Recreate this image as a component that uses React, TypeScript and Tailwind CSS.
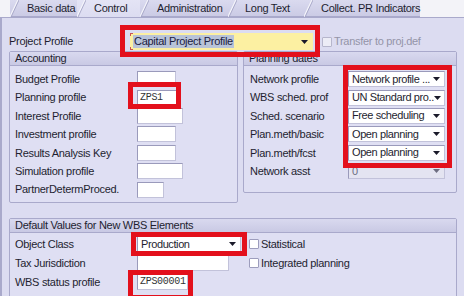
import clsx from "clsx";

type FieldProps = { className?: string; value?: string; mono?: boolean };

function Field({ className, value, mono }: FieldProps) {
  return (
    <div
      className={clsx(
        "h-[16px] bg-white border border-[#c2c2da] border-t-[#9a9abb] border-l-[#9a9abb] pl-[2px] flex items-center leading-none whitespace-nowrap",
        mono && "font-['Liberation_Mono',monospace] text-[10px] tracking-[-0.3px] text-[#333]",
        className
      )}
    >
      {value}
    </div>
  );
}

type SelectProps = { className?: string; value: string; disabled?: boolean };

function Select({ className, value, disabled }: SelectProps) {
  return (
    <div
      className={clsx(
        "h-[16px] flex items-center justify-between pl-[3px] pr-[4px] border border-[#c2c2da] border-t-[#9a9abb] border-l-[#9a9abb] leading-none",
        disabled ? "bg-[#e4e4f1] text-[#6d6d80]" : "bg-white",
        className
      )}
    >
      <span className="whitespace-nowrap tracking-[-0.4px]">{value}</span>
      <svg width="7" height="4" viewBox="0 0 7 4" className="shrink-0">
        <path d="M0 0h7L3.5 4z" fill={disabled ? "#6d6d80" : "#1a1a2a"} />
      </svg>
    </div>
  );
}

function Check({ label }: { label: string }) {
  return (
    <div className="flex items-center gap-[2px]">
      <div className="w-[10px] h-[10px] bg-white border border-[#9d9dbd] rounded-[1px]" />
      <span>{label}</span>
    </div>
  );
}

function Panel({ title, className, children }: { title: string; className?: string; children: React.ReactNode }) {
  return (
    <div className={clsx("border border-[#a9a9cb] rounded-[2px] bg-[#dfdff3]", className)}>
      <div className="h-[14px] bg-gradient-to-b from-[#d9d9ef] to-[#c9c9e4] border-b border-[#a9a9cb] pl-[5px] leading-[13px]">
        {title}
      </div>
      {children}
    </div>
  );
}

const tabs = [
  { label: "Basic data", w: "w-[67px]", active: false },
  { label: "Control", w: "w-[63px]", active: true },
  { label: "Administration", w: "w-[88px]", active: false },
  { label: "Long Text", w: "w-[76px]", active: false },
  { label: "Collect. PR Indicators", w: "w-[116px]", active: false },
];

const accounting: { label: string; w: string; value?: string }[] = [
  { label: "Budget Profile", w: "w-[39px]" },
  { label: "Planning profile", w: "w-[41px]", value: "ZPS1" },
  { label: "Interest Profile", w: "w-[46px]" },
  { label: "Investment profile", w: "w-[39px]" },
  { label: "Results Analysis Key", w: "w-[39px]" },
  { label: "Simulation profile", w: "w-[46px]" },
  { label: "PartnerDetermProced.", w: "w-[27px]" },
];

const planning = [
  { label: "Network profile", value: "Network profile ..." },
  { label: "WBS sched. prof", value: "UN Standard pro.." },
  { label: "Sched. scenario", value: "Free scheduling" },
  { label: "Plan.meth/basic", value: "Open planning" },
  { label: "Plan.meth/fcst", value: "Open planning" },
];

export default function App() {
  return (
    <div className="relative w-[464px] h-[296px] overflow-hidden bg-[#f3f3f8] font-['Liberation_Sans',Arial,sans-serif] text-[11px] tracking-[-0.3px] text-[#1e1e30]">
      {/* tab strip */}
      <div className="h-[17px] flex items-end pl-[10px]">
        {tabs.map((t) => (
          <div
            key={t.label}
            className={clsx(
              "relative h-[17px] pl-[17px] leading-[16px] whitespace-nowrap",
              t.w,
              t.active
                ? "bg-gradient-to-b from-[#e4e4f5] to-[#dcdcf1] z-10"
                : "bg-gradient-to-b from-[#dadaef] to-[#cbcbe5] border-b border-[#a9a9cb]"
            )}
          >
            <svg className="absolute left-0 top-0" width="9" height="17" viewBox="0 0 9 17">
              <path d="M0 17L8 0" stroke="#f5f5fb" strokeWidth="1.4" />
              <path d="M1 17L9 0" stroke="#9d9dc0" strokeWidth="0.8" />
            </svg>
            {t.label}
          </div>
        ))}
      </div>

      {/* content */}
      <div className="h-[279px] bg-[#dcdcf1] border-l-2 border-t border-[#a9a9cb] pl-[7px]">
        <div className="mt-[15px] h-[17px] flex items-center">
          <div className="w-[121px]">Project Profile</div>
          <div className="relative w-[183px] h-[17px] bg-[#fcf0a2] flex items-center justify-between pl-[3px] pr-[5px]">
            <div className="absolute left-0 top-0 w-[3px] h-[3px] border-l border-t border-[#c55]" />
            <div className="absolute left-0 bottom-0 w-[3px] h-[3px] border-l border-b border-[#c55]" />
            <span className="bg-[#b8c3d8] text-[#1c2040] leading-[13px] px-[1px]">Capital Project Profile</span>
            <svg width="7" height="4" viewBox="0 0 7 4">
              <path d="M0 0h7L3.5 4z" fill="#1a1a2a" />
            </svg>
          </div>
          <div className="ml-[9px] flex items-center gap-[2px] text-[#9494a8]">
            <div className="w-[10px] h-[10px] bg-[#ececf6] border border-[#b6b6cc] rounded-[1px]" />
            <span>Transfer to proj.def</span>
          </div>
        </div>

        <div className="mt-[1px] flex items-start gap-[5px]">
          <Panel title="Accounting" className="w-[229px]">
            <div className="pt-[4px] pb-[3px] pl-[5px]">
              {accounting.map((r) => (
                <div key={r.label} className="h-[18.4px] flex items-center">
                  <div className="w-[122px]">{r.label}</div>
                  <Field className={r.w} value={r.value} mono />
                </div>
              ))}
            </div>
          </Panel>

          <Panel title="Planning dates" className="w-[214px]">
            <div className="pt-[4px] pb-[12px] pl-[6px]">
              {planning.map((r) => (
                <div key={r.label} className="h-[18.4px] flex items-center">
                  <div className="w-[98px]">{r.label}</div>
                  <Select className="w-[97px]" value={r.value} />
                </div>
              ))}
              <div className="h-[18.4px] flex items-center">
                <div className="w-[98px]">Network asst</div>
                <Select className="w-[97px]" value="0" disabled />
              </div>
            </div>
          </Panel>
        </div>

        <Panel title="Default Values for New WBS Elements" className="mt-[15px] w-[448px] h-[90px]">
          <div className="pt-[2px] pl-[5px] grid grid-cols-[122px_112px_1fr] auto-rows-[19px] items-center">
            <div>Object Class</div>
            <Select className="w-[104px]" value="Production" />
            <Check label="Statistical" />
            <div>Tax Jurisdiction</div>
            <Field className="w-[92px]" />
            <Check label="Integrated planning" />
            <div>WBS status profile</div>
            <Field className="w-[51px]" value="ZPS00001" mono />
            <div />
          </div>
        </Panel>
      </div>

      {/* red annotation frames */}
      <div className="absolute left-[120px] top-[25px] w-[200px] h-[32px] border-[5px] border-[#e3101c] pointer-events-none" />
      <div className="absolute left-[128px] top-[82px] w-[53px] h-[27px] border-[5px] border-[#e3101c] pointer-events-none" />
      <div className="absolute left-[343px] top-[65px] w-[109px] h-[103px] border-[5px] border-[#e3101c] pointer-events-none" />
      <div className="absolute left-[131px] top-[232px] w-[116px] h-[24px] border-[5px] border-[#e3101c] pointer-events-none" />
      <div className="absolute left-[128px] top-[270px] w-[65px] h-[30px] border-[5px] border-[#e3101c] pointer-events-none" />
    </div>
  );
}
